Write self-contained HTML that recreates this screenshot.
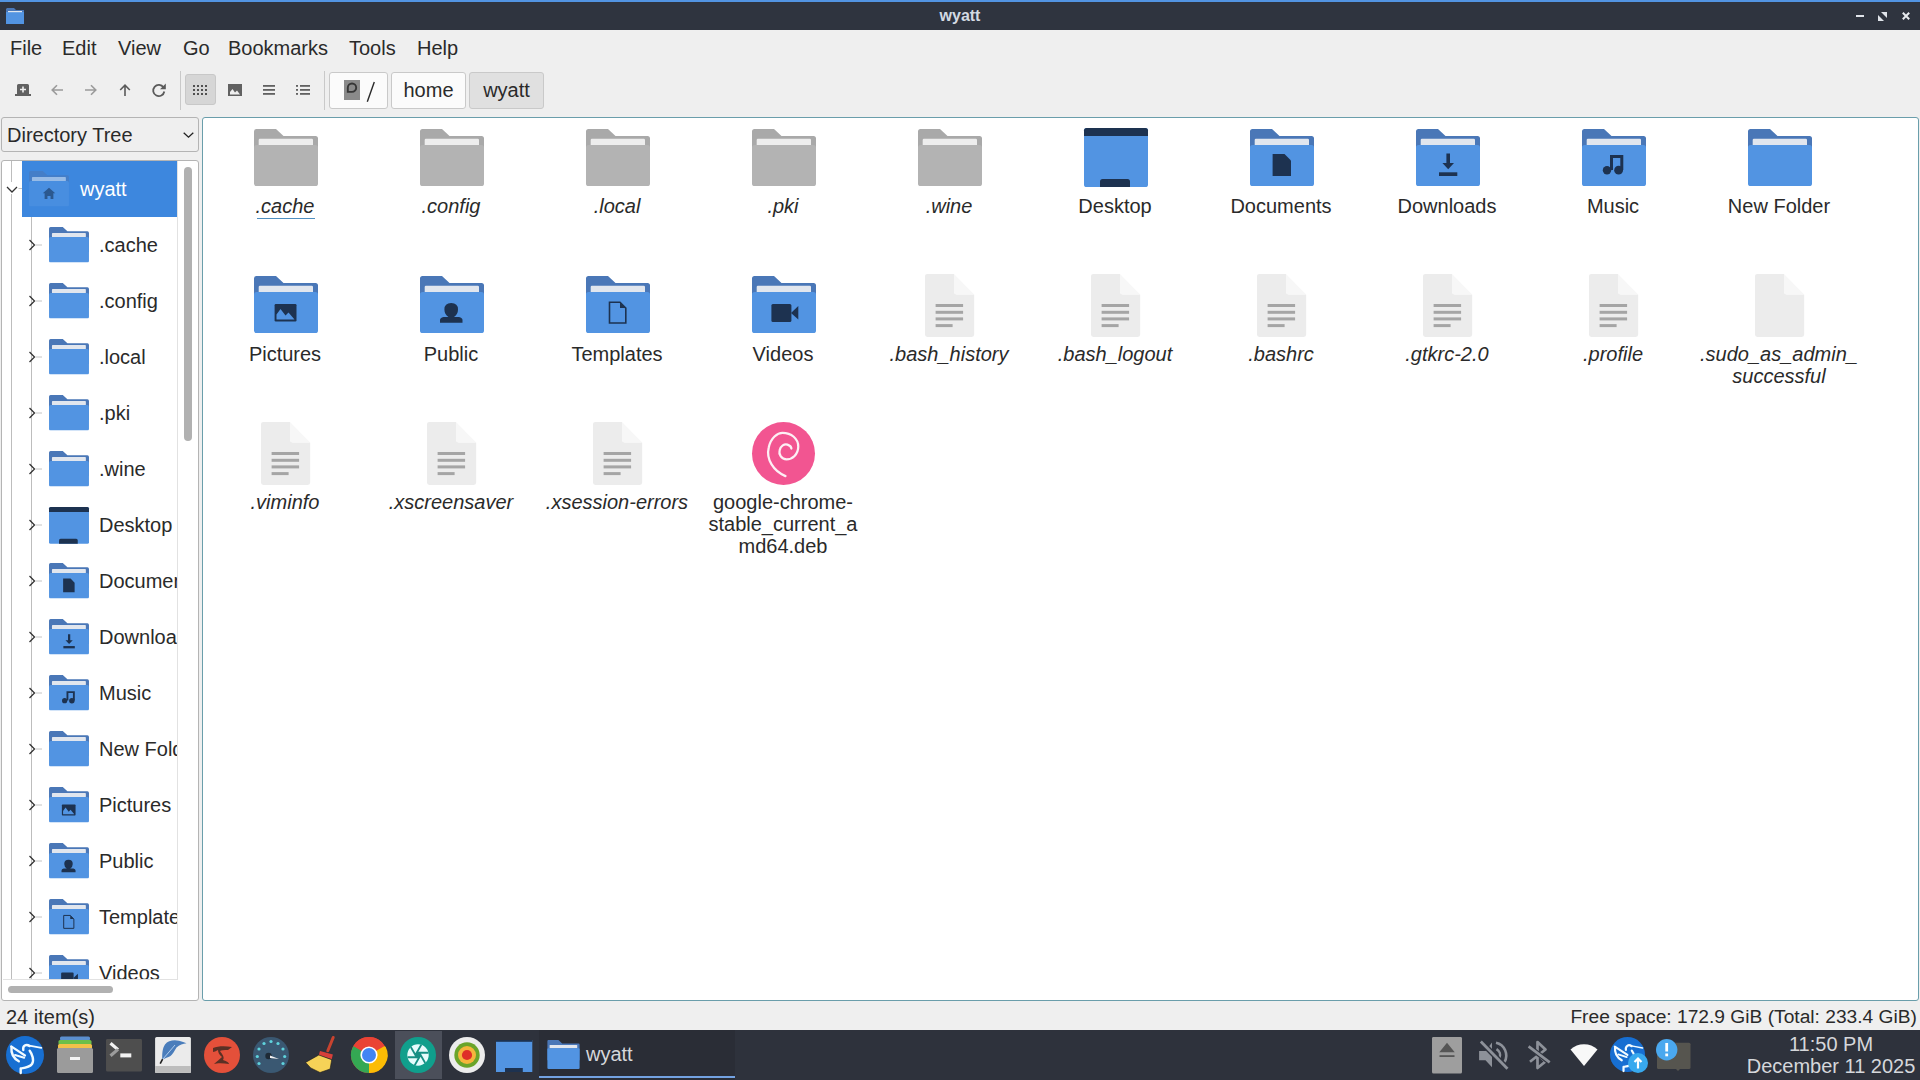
<!DOCTYPE html>
<html><head><meta charset="utf-8">
<style>
*{margin:0;padding:0;box-sizing:border-box}
html,body{width:1920px;height:1080px;overflow:hidden;background:#efefef;font-family:"Liberation Sans",sans-serif;color:#1a1a1a}
.abs{position:absolute}
.ic{position:absolute;overflow:visible}
.lbl{position:absolute;width:180px;text-align:center;font-size:20px;line-height:22px;height:22px;white-space:nowrap;color:#2a2a2a}
.it{font-style:italic}
.tl{position:absolute;font-size:20px;line-height:24px;white-space:nowrap;color:#2a2a2a}
.menu{position:absolute;top:36px;font-size:20px;line-height:24px;color:#2a2a2a}
</style></head><body>
<svg width="0" height="0" style="position:absolute"><defs><symbol id="fgray" viewBox="0 0 64 57"><path d="M2.5 0H22L29.5 7H61.5Q64 7 64 9.5V40H0V2.5Q0 0 2.5 0Z" fill="#a9a9a9"/><rect x="4.7" y="9.8" width="54.3" height="6.6" rx="1.2" fill="#ededed"/><rect x="0" y="16" width="64" height="41" rx="2.6" fill="#b3b3b3"/></symbol>
<symbol id="fblue" viewBox="0 0 64 57"><path d="M2.5 0H22L29.5 7H61.5Q64 7 64 9.5V40H0V2.5Q0 0 2.5 0Z" fill="#4a77b7"/><rect x="4.7" y="9.8" width="54.3" height="6.6" rx="1.2" fill="#e1e6ee"/><rect x="0" y="16" width="64" height="41" rx="2.6" fill="#5294e2"/></symbol></defs></svg>

<!-- title bar -->
<div class="abs" style="left:0;top:0;width:1920px;height:30px;background:#2f343f"></div>
<div class="abs" style="left:0;top:0;width:1920px;height:2px;background:#5294e2"></div>
<svg class="ic" style="left:6px;top:8px;width:18px;height:16px" viewBox="0 0 18 16"><path d="M1 0H8L10 2H18V16H0V1Z" fill="#4a77b7"/><rect x="0" y="4" width="18" height="12" fill="#5294e2"/><rect x="2" y="3" width="14" height="1.2" fill="#dfe6ee"/></svg>
<div class="abs" style="left:0;top:5px;width:1920px;text-align:center;font-size:16px;line-height:22px;font-weight:bold;color:#d3dae3">wyatt</div>
<div class="abs" style="left:1856px;top:15px;width:8px;height:2px;background:#e0e4ea"></div>
<svg class="ic" style="left:1878px;top:12px;width:9px;height:9px" viewBox="0 0 9 9"><path d="M3 0H9V6Z" fill="#e0e4ea"/><path d="M0 3V9H6Z" fill="#e0e4ea"/></svg>
<svg class="ic" style="left:1902px;top:12px;width:8px;height:8px" viewBox="0 0 8 8"><path d="M0.8 0.8L7.2 7.2M7.2 0.8L0.8 7.2" stroke="#e8ebef" stroke-width="2"/></svg>

<!-- menu -->
<div class="menu" style="left:10px">File</div>
<div class="menu" style="left:62px">Edit</div>
<div class="menu" style="left:118px">View</div>
<div class="menu" style="left:183px">Go</div>
<div class="menu" style="left:228px">Bookmarks</div>
<div class="menu" style="left:349px">Tools</div>
<div class="menu" style="left:417px">Help</div>

<!-- toolbar -->
<svg class="ic" style="left:15px;top:84px;width:16px;height:12px" viewBox="0 0 16 12"><path d="M2 10V1.5Q2 0 3.5 0H12.5Q14 0 14 1.5V10H16V12H0V10Z" fill="#616161"/><path d="M7.2 2.5H8.8V4.7H11V6.3H8.8V8.5H7.2V6.3H5V4.7H7.2Z" fill="#efefef"/></svg>
<svg class="ic" style="left:51px;top:84px;width:12px;height:12px" viewBox="0 0 12 12"><path d="M12 6H1.5M6 1.2L1.2 6L6 10.8" fill="none" stroke="#9a9a9a" stroke-width="1.6"/></svg>
<svg class="ic" style="left:85px;top:84px;width:12px;height:12px" viewBox="0 0 12 12"><path d="M0 6H10.5M6 1.2L10.8 6L6 10.8" fill="none" stroke="#9a9a9a" stroke-width="1.6"/></svg>
<svg class="ic" style="left:119px;top:84px;width:12px;height:12px" viewBox="0 0 12 12"><path d="M6 12V1.5M1.2 6L6 1.2L10.8 6" fill="none" stroke="#5a5a5a" stroke-width="1.6"/></svg>
<svg class="ic" style="left:152px;top:83px;width:14px;height:14px" viewBox="0 0 14 14"><path d="M11.5 4.5A5.6 5.6 0 1 0 12.3 8.5" fill="none" stroke="#5a5a5a" stroke-width="1.8"/><path d="M13.8 0.5V6.3H8Z" fill="#5a5a5a"/></svg>
<div class="abs" style="left:180px;top:71px;width:1px;height:39px;background:#c9c9c9"></div>
<div class="abs" style="left:185px;top:74px;width:31px;height:31px;background:#d6d6d6;border:1px solid #c8c8c8;border-radius:3px"></div>
<svg class="ic" style="left:193px;top:85px;width:16px;height:11px" viewBox="0 0 16 11"><g fill="#505050"><rect x="0" y="0" width="2" height="2"/><rect x="4" y="0" width="2" height="2"/><rect x="8" y="0" width="2" height="2"/><rect x="12" y="0" width="2" height="2"/><rect x="0" y="4" width="2" height="2"/><rect x="4" y="4" width="2" height="2"/><rect x="8" y="4" width="2" height="2"/><rect x="12" y="4" width="2" height="2"/><rect x="0" y="8" width="2" height="2"/><rect x="4" y="8" width="2" height="2"/><rect x="8" y="8" width="2" height="2"/><rect x="12" y="8" width="2" height="2"/></g></svg>
<svg class="ic" style="left:228px;top:84px;width:14px;height:12px" viewBox="0 0 14 12"><rect width="14" height="12" fill="#616161"/><path d="M2 10.5V8L4.5 5L7 8.5L9 6.5L12 10.5Z" fill="#efefef"/></svg>
<svg class="ic" style="left:263px;top:85px;width:12px;height:10px" viewBox="0 0 12 10"><g fill="#616161"><rect y="0" width="12" height="1.8"/><rect y="4" width="12" height="1.8"/><rect y="8" width="12" height="1.8"/></g></svg>
<svg class="ic" style="left:296px;top:85px;width:14px;height:10px" viewBox="0 0 14 10"><g fill="#616161"><rect y="0" width="2" height="1.8"/><rect x="4" y="0" width="10" height="1.8"/><rect y="4" width="2" height="1.8"/><rect x="4" y="4" width="10" height="1.8"/><rect y="8" width="2" height="1.8"/><rect x="4" y="8" width="10" height="1.8"/></g></svg>
<div class="abs" style="left:324px;top:71px;width:1px;height:39px;background:#c9c9c9"></div>
<div class="abs" style="left:329px;top:72px;width:59px;height:37px;background:#fbfbfb;border:1px solid #c9c9c9;border-radius:3px"></div>
<svg class="ic" style="left:344px;top:80px;width:16px;height:20px" viewBox="0 0 16 20"><rect width="16" height="20" fill="#8a8a8a"/><path d="M3.8 11.9V7.7A4.2 4.2 0 1 1 8 11.9Z" fill="none" stroke="#363636" stroke-width="1.9"/></svg>
<svg class="ic" style="left:366px;top:81px;width:10px;height:22px" viewBox="0 0 10 22"><path d="M8.3 1L1.3 20.7" stroke="#2a2a2a" stroke-width="1.4"/></svg>
<div class="abs" style="left:391px;top:72px;width:75px;height:37px;background:#fbfbfb;border:1px solid #c9c9c9;border-radius:3px;text-align:center;font-size:20px;line-height:35px;color:#2a2a2a">home</div>
<div class="abs" style="left:469px;top:72px;width:75px;height:37px;background:#e0e0e0;border:1px solid #c9c9c9;border-radius:3px;text-align:center;font-size:20px;line-height:35px;color:#2a2a2a">wyatt</div>

<!-- side combobox -->
<div class="abs" style="left:1px;top:117px;width:198px;height:35px;background:#efefef;border:1px solid #b4b4b4;border-radius:3px"></div>
<div class="abs" style="left:7px;top:123px;font-size:20px;line-height:24px;color:#2a2a2a">Directory Tree</div>
<svg class="ic" style="left:182.5px;top:131.5px;width:11px;height:6px" viewBox="0 0 11 6"><path d="M0.7 0.7L5.5 5.2L10.3 0.7" fill="none" stroke="#222" stroke-width="1.3"/></svg>

<!-- tree box -->
<div class="abs" style="left:1px;top:160px;width:198px;height:841px;background:#fff;border:1px solid #b4b4b4;border-radius:3px"></div>
<div class="abs" style="left:2px;top:161px;width:176px;height:818px;overflow:hidden">
<div class="abs" style="left:-2px;top:-161px;width:1920px;height:1080px">
<div style="position:absolute;left:11px;top:161px;width:1px;height:818px;background:#bdbdbd"></div>
<div style="position:absolute;left:31px;top:217px;width:1px;height:762px;background:#bdbdbd"></div>
<div style="position:absolute;left:22px;top:161px;width:155px;height:56px;background:#3d87de"></div>
<svg class="ic" style="left:29px;top:171px;width:40px;height:35.6px;opacity:.55" viewBox="0 0 64 57"><use href="#fblue"/><path d="M32 27L42 35.5H39V45H34.5V40H29.5V45H25V35.5H22Z" fill="#1d3250"/></svg>
<div class="tl" style="left:80px;top:177px;color:#fff">wyatt</div>
<div class="abs" style="left:5px;top:182px;width:13px;height:12px;background:#fff"></div><svg class="ic" style="left:6px;top:186px;width:16px;height:8px" viewBox="0 0 16 8"><path d="M1 1L6 6L11 1" fill="none" stroke="#333" stroke-width="1.3"/><path d="M12.5 2.5H16" stroke="#c4c4c4" stroke-width="1"/></svg>
<svg class="ic" style="left:49px;top:227px;width:40px;height:35.6px" viewBox="0 0 64 57"><use href="#fblue"/></svg>
<div class="tl" style="left:99px;top:233px">.cache</div>
<svg class="ic" style="left:28px;top:239px;width:14px;height:12px" viewBox="0 0 14 12"><path d="M1.5 1L6.5 6L1.5 11" fill="none" stroke="#333" stroke-width="1.3"/><path d="M7.5 6H14" stroke="#c4c4c4" stroke-width="1"/></svg>
<svg class="ic" style="left:49px;top:283px;width:40px;height:35.6px" viewBox="0 0 64 57"><use href="#fblue"/></svg>
<div class="tl" style="left:99px;top:289px">.config</div>
<svg class="ic" style="left:28px;top:295px;width:14px;height:12px" viewBox="0 0 14 12"><path d="M1.5 1L6.5 6L1.5 11" fill="none" stroke="#333" stroke-width="1.3"/><path d="M7.5 6H14" stroke="#c4c4c4" stroke-width="1"/></svg>
<svg class="ic" style="left:49px;top:339px;width:40px;height:35.6px" viewBox="0 0 64 57"><use href="#fblue"/></svg>
<div class="tl" style="left:99px;top:345px">.local</div>
<svg class="ic" style="left:28px;top:351px;width:14px;height:12px" viewBox="0 0 14 12"><path d="M1.5 1L6.5 6L1.5 11" fill="none" stroke="#333" stroke-width="1.3"/><path d="M7.5 6H14" stroke="#c4c4c4" stroke-width="1"/></svg>
<svg class="ic" style="left:49px;top:395px;width:40px;height:35.6px" viewBox="0 0 64 57"><use href="#fblue"/></svg>
<div class="tl" style="left:99px;top:401px">.pki</div>
<svg class="ic" style="left:28px;top:407px;width:14px;height:12px" viewBox="0 0 14 12"><path d="M1.5 1L6.5 6L1.5 11" fill="none" stroke="#333" stroke-width="1.3"/><path d="M7.5 6H14" stroke="#c4c4c4" stroke-width="1"/></svg>
<svg class="ic" style="left:49px;top:451px;width:40px;height:35.6px" viewBox="0 0 64 57"><use href="#fblue"/></svg>
<div class="tl" style="left:99px;top:457px">.wine</div>
<svg class="ic" style="left:28px;top:463px;width:14px;height:12px" viewBox="0 0 14 12"><path d="M1.5 1L6.5 6L1.5 11" fill="none" stroke="#333" stroke-width="1.3"/><path d="M7.5 6H14" stroke="#c4c4c4" stroke-width="1"/></svg>
<svg class="ic" style="left:49px;top:507px;width:40px;height:36.849122807017544px" viewBox="0 0 64 59"><rect x="0" y="0" width="64" height="59" rx="2.6" fill="#5294e2"/><path d="M2.6 0H61.4Q64 0 64 2.6V8H0V2.6Q0 0 2.6 0Z" fill="#1d3250"/><path d="M16 59V53.5Q16 51 18.5 51H43.5Q46 51 46 53.5V59Z" fill="#1d3250"/></svg>
<div class="tl" style="left:99px;top:513px">Desktop</div>
<svg class="ic" style="left:28px;top:519px;width:14px;height:12px" viewBox="0 0 14 12"><path d="M1.5 1L6.5 6L1.5 11" fill="none" stroke="#333" stroke-width="1.3"/><path d="M7.5 6H14" stroke="#c4c4c4" stroke-width="1"/></svg>
<svg class="ic" style="left:49px;top:563px;width:40px;height:35.6px" viewBox="0 0 64 57"><use href="#fblue"/><path d="M22.6 25H34.5L41 31.5V47H22.6Z" fill="#1d3250"/></svg>
<div class="tl" style="left:99px;top:569px">Documents</div>
<svg class="ic" style="left:28px;top:575px;width:14px;height:12px" viewBox="0 0 14 12"><path d="M1.5 1L6.5 6L1.5 11" fill="none" stroke="#333" stroke-width="1.3"/><path d="M7.5 6H14" stroke="#c4c4c4" stroke-width="1"/></svg>
<svg class="ic" style="left:49px;top:619px;width:40px;height:35.6px" viewBox="0 0 64 57"><use href="#fblue"/><path d="M30.4 24.4H34V34H38L32.2 40.2L26.4 34H30.4Z" fill="#1d3250"/><rect x="23" y="43.3" width="18.3" height="3.7" fill="#1d3250"/></svg>
<div class="tl" style="left:99px;top:625px">Downloads</div>
<svg class="ic" style="left:28px;top:631px;width:14px;height:12px" viewBox="0 0 14 12"><path d="M1.5 1L6.5 6L1.5 11" fill="none" stroke="#333" stroke-width="1.3"/><path d="M7.5 6H14" stroke="#c4c4c4" stroke-width="1"/></svg>
<svg class="ic" style="left:49px;top:675px;width:40px;height:35.6px" viewBox="0 0 64 57"><use href="#fblue"/><path d="M28 26H41.3V41H38.3V29H31V41H28Z" fill="#1d3250"/><circle cx="25" cy="41.2" r="4.2" fill="#1d3250"/><circle cx="36.6" cy="41.2" r="4.4" fill="#1d3250"/></svg>
<div class="tl" style="left:99px;top:681px">Music</div>
<svg class="ic" style="left:28px;top:687px;width:14px;height:12px" viewBox="0 0 14 12"><path d="M1.5 1L6.5 6L1.5 11" fill="none" stroke="#333" stroke-width="1.3"/><path d="M7.5 6H14" stroke="#c4c4c4" stroke-width="1"/></svg>
<svg class="ic" style="left:49px;top:731px;width:40px;height:35.6px" viewBox="0 0 64 57"><use href="#fblue"/></svg>
<div class="tl" style="left:99px;top:737px">New Folder</div>
<svg class="ic" style="left:28px;top:743px;width:14px;height:12px" viewBox="0 0 14 12"><path d="M1.5 1L6.5 6L1.5 11" fill="none" stroke="#333" stroke-width="1.3"/><path d="M7.5 6H14" stroke="#c4c4c4" stroke-width="1"/></svg>
<svg class="ic" style="left:49px;top:787px;width:40px;height:35.6px" viewBox="0 0 64 57"><use href="#fblue"/><rect x="20.6" y="28" width="21.9" height="17.5" rx="1.2" fill="#1d3250"/><path d="M22.5 43.5V38.5L26.5 33L31.5 39.5L34.5 36.5L40.5 43.5Z" fill="#5294e2"/></svg>
<div class="tl" style="left:99px;top:793px">Pictures</div>
<svg class="ic" style="left:28px;top:799px;width:14px;height:12px" viewBox="0 0 14 12"><path d="M1.5 1L6.5 6L1.5 11" fill="none" stroke="#333" stroke-width="1.3"/><path d="M7.5 6H14" stroke="#c4c4c4" stroke-width="1"/></svg>
<svg class="ic" style="left:49px;top:843px;width:40px;height:35.6px" viewBox="0 0 64 57"><use href="#fblue"/><path d="M31.2 27Q38 27 38 33.5Q38 38 34 41H39Q42.5 41.8 42.5 44V46.8H20V44Q20 41.8 23.5 41H28.4Q24.4 38 24.4 33.5Q24.4 27 31.2 27Z" fill="#1d3250"/></svg>
<div class="tl" style="left:99px;top:849px">Public</div>
<svg class="ic" style="left:28px;top:855px;width:14px;height:12px" viewBox="0 0 14 12"><path d="M1.5 1L6.5 6L1.5 11" fill="none" stroke="#333" stroke-width="1.3"/><path d="M7.5 6H14" stroke="#c4c4c4" stroke-width="1"/></svg>
<svg class="ic" style="left:49px;top:899px;width:40px;height:35.6px" viewBox="0 0 64 57"><use href="#fblue"/><path d="M23.5 26.3H34L39.8 32.1V47H23.5Z" fill="none" stroke="#1d3250" stroke-width="1.6"/><path d="M34 26.3V32.1H39.8Z" fill="#1d3250"/></svg>
<div class="tl" style="left:99px;top:905px">Templates</div>
<svg class="ic" style="left:28px;top:911px;width:14px;height:12px" viewBox="0 0 14 12"><path d="M1.5 1L6.5 6L1.5 11" fill="none" stroke="#333" stroke-width="1.3"/><path d="M7.5 6H14" stroke="#c4c4c4" stroke-width="1"/></svg>
<svg class="ic" style="left:49px;top:955px;width:40px;height:35.6px" viewBox="0 0 64 57"><use href="#fblue"/><rect x="19.4" y="28" width="20" height="18" rx="1.5" fill="#1d3250"/><path d="M39 37L46.3 30V43.5Z" fill="#1d3250"/></svg>
<div class="tl" style="left:99px;top:961px">Videos</div>
<svg class="ic" style="left:28px;top:967px;width:14px;height:12px" viewBox="0 0 14 12"><path d="M1.5 1L6.5 6L1.5 11" fill="none" stroke="#333" stroke-width="1.3"/><path d="M7.5 6H14" stroke="#c4c4c4" stroke-width="1"/></svg>
</div></div>
<div class="abs" style="left:177px;top:161px;width:1px;height:819px;background:#e2e2e2"></div><div class="abs" style="left:3px;top:979px;width:175px;height:1px;background:#e2e2e2"></div>
<div class="abs" style="left:184px;top:167px;width:8px;height:274px;background:#b1b1b1;border-radius:4px"></div>
<div class="abs" style="left:8px;top:986px;width:105px;height:7px;background:#b1b1b1;border-radius:4px"></div>

<!-- main view -->
<div class="abs" style="left:202px;top:117px;width:1717px;height:884px;background:#fff;border:1px solid #6a9eab;border-radius:3px"></div>
<svg class="ic" style="left:254px;top:128.7px;width:64px;height:57px" viewBox="0 0 64 57"><use href="#fgray"/></svg>
<div class="lbl it" style="left:195px;top:195px">.cache</div>
<svg class="ic" style="left:420px;top:128.7px;width:64px;height:57px" viewBox="0 0 64 57"><use href="#fgray"/></svg>
<div class="lbl it" style="left:361px;top:195px">.config</div>
<svg class="ic" style="left:586px;top:128.7px;width:64px;height:57px" viewBox="0 0 64 57"><use href="#fgray"/></svg>
<div class="lbl it" style="left:527px;top:195px">.local</div>
<svg class="ic" style="left:752px;top:128.7px;width:64px;height:57px" viewBox="0 0 64 57"><use href="#fgray"/></svg>
<div class="lbl it" style="left:693px;top:195px">.pki</div>
<svg class="ic" style="left:918px;top:128.7px;width:64px;height:57px" viewBox="0 0 64 57"><use href="#fgray"/></svg>
<div class="lbl it" style="left:859px;top:195px">.wine</div>
<svg class="ic" style="left:1084px;top:127.49999999999999px;width:64px;height:59.0px" viewBox="0 0 64 59"><rect x="0" y="0" width="64" height="59" rx="2.6" fill="#5294e2"/><path d="M2.6 0H61.4Q64 0 64 2.6V8H0V2.6Q0 0 2.6 0Z" fill="#1d3250"/><path d="M16 59V53.5Q16 51 18.5 51H43.5Q46 51 46 53.5V59Z" fill="#1d3250"/></svg>
<div class="lbl" style="left:1025px;top:195px">Desktop</div>
<svg class="ic" style="left:1250px;top:128.7px;width:64px;height:57px" viewBox="0 0 64 57"><use href="#fblue"/><path d="M22.6 25H34.5L41 31.5V47H22.6Z" fill="#1d3250"/></svg>
<div class="lbl" style="left:1191px;top:195px">Documents</div>
<svg class="ic" style="left:1416px;top:128.7px;width:64px;height:57px" viewBox="0 0 64 57"><use href="#fblue"/><path d="M30.4 24.4H34V34H38L32.2 40.2L26.4 34H30.4Z" fill="#1d3250"/><rect x="23" y="43.3" width="18.3" height="3.7" fill="#1d3250"/></svg>
<div class="lbl" style="left:1357px;top:195px">Downloads</div>
<svg class="ic" style="left:1582px;top:128.7px;width:64px;height:57px" viewBox="0 0 64 57"><use href="#fblue"/><path d="M28 26H41.3V41H38.3V29H31V41H28Z" fill="#1d3250"/><circle cx="25" cy="41.2" r="4.2" fill="#1d3250"/><circle cx="36.6" cy="41.2" r="4.4" fill="#1d3250"/></svg>
<div class="lbl" style="left:1523px;top:195px">Music</div>
<svg class="ic" style="left:1748px;top:128.7px;width:64px;height:57px" viewBox="0 0 64 57"><use href="#fblue"/></svg>
<div class="lbl" style="left:1689px;top:195px">New Folder</div>
<svg class="ic" style="left:254px;top:276.2px;width:64px;height:57px" viewBox="0 0 64 57"><use href="#fblue"/><rect x="20.6" y="28" width="21.9" height="17.5" rx="1.2" fill="#1d3250"/><path d="M22.5 43.5V38.5L26.5 33L31.5 39.5L34.5 36.5L40.5 43.5Z" fill="#5294e2"/></svg>
<div class="lbl" style="left:195px;top:343px">Pictures</div>
<svg class="ic" style="left:420px;top:276.2px;width:64px;height:57px" viewBox="0 0 64 57"><use href="#fblue"/><path d="M31.2 27Q38 27 38 33.5Q38 38 34 41H39Q42.5 41.8 42.5 44V46.8H20V44Q20 41.8 23.5 41H28.4Q24.4 38 24.4 33.5Q24.4 27 31.2 27Z" fill="#1d3250"/></svg>
<div class="lbl" style="left:361px;top:343px">Public</div>
<svg class="ic" style="left:586px;top:276.2px;width:64px;height:57px" viewBox="0 0 64 57"><use href="#fblue"/><path d="M23.5 26.3H34L39.8 32.1V47H23.5Z" fill="none" stroke="#1d3250" stroke-width="1.6"/><path d="M34 26.3V32.1H39.8Z" fill="#1d3250"/></svg>
<div class="lbl" style="left:527px;top:343px">Templates</div>
<svg class="ic" style="left:752px;top:276.2px;width:64px;height:57px" viewBox="0 0 64 57"><use href="#fblue"/><rect x="19.4" y="28" width="20" height="18" rx="1.5" fill="#1d3250"/><path d="M39 37L46.3 30V43.5Z" fill="#1d3250"/></svg>
<div class="lbl" style="left:693px;top:343px">Videos</div>
<svg class="ic" style="left:924.6px;top:274px;width:49.2px;height:63px" viewBox="0 0 49.2 63"><path d="M2.5 0H29V17.4Q29 20.4 32 20.4H49.2V60.5Q49.2 63 46.7 63H2.5Q0 63 0 60.5V2.5Q0 0 2.5 0Z" fill="#ececec"/><path d="M29 0L49.2 20.4H32Q29 20.4 29 17.4Z" fill="#f7f7f7"/><g fill="#a5a5a5"><rect x="10.6" y="30" width="27.5" height="3"/><rect x="10.6" y="36.8" width="27.5" height="3"/><rect x="10.6" y="43.4" width="27.5" height="3"/><rect x="10.6" y="50.1" width="17" height="3"/></g></svg>
<div class="lbl it" style="left:859px;top:343px">.bash_history</div>
<svg class="ic" style="left:1090.6px;top:274px;width:49.2px;height:63px" viewBox="0 0 49.2 63"><path d="M2.5 0H29V17.4Q29 20.4 32 20.4H49.2V60.5Q49.2 63 46.7 63H2.5Q0 63 0 60.5V2.5Q0 0 2.5 0Z" fill="#ececec"/><path d="M29 0L49.2 20.4H32Q29 20.4 29 17.4Z" fill="#f7f7f7"/><g fill="#a5a5a5"><rect x="10.6" y="30" width="27.5" height="3"/><rect x="10.6" y="36.8" width="27.5" height="3"/><rect x="10.6" y="43.4" width="27.5" height="3"/><rect x="10.6" y="50.1" width="17" height="3"/></g></svg>
<div class="lbl it" style="left:1025px;top:343px">.bash_logout</div>
<svg class="ic" style="left:1256.6px;top:274px;width:49.2px;height:63px" viewBox="0 0 49.2 63"><path d="M2.5 0H29V17.4Q29 20.4 32 20.4H49.2V60.5Q49.2 63 46.7 63H2.5Q0 63 0 60.5V2.5Q0 0 2.5 0Z" fill="#ececec"/><path d="M29 0L49.2 20.4H32Q29 20.4 29 17.4Z" fill="#f7f7f7"/><g fill="#a5a5a5"><rect x="10.6" y="30" width="27.5" height="3"/><rect x="10.6" y="36.8" width="27.5" height="3"/><rect x="10.6" y="43.4" width="27.5" height="3"/><rect x="10.6" y="50.1" width="17" height="3"/></g></svg>
<div class="lbl it" style="left:1191px;top:343px">.bashrc</div>
<svg class="ic" style="left:1422.6px;top:274px;width:49.2px;height:63px" viewBox="0 0 49.2 63"><path d="M2.5 0H29V17.4Q29 20.4 32 20.4H49.2V60.5Q49.2 63 46.7 63H2.5Q0 63 0 60.5V2.5Q0 0 2.5 0Z" fill="#ececec"/><path d="M29 0L49.2 20.4H32Q29 20.4 29 17.4Z" fill="#f7f7f7"/><g fill="#a5a5a5"><rect x="10.6" y="30" width="27.5" height="3"/><rect x="10.6" y="36.8" width="27.5" height="3"/><rect x="10.6" y="43.4" width="27.5" height="3"/><rect x="10.6" y="50.1" width="17" height="3"/></g></svg>
<div class="lbl it" style="left:1357px;top:343px">.gtkrc-2.0</div>
<svg class="ic" style="left:1588.6px;top:274px;width:49.2px;height:63px" viewBox="0 0 49.2 63"><path d="M2.5 0H29V17.4Q29 20.4 32 20.4H49.2V60.5Q49.2 63 46.7 63H2.5Q0 63 0 60.5V2.5Q0 0 2.5 0Z" fill="#ececec"/><path d="M29 0L49.2 20.4H32Q29 20.4 29 17.4Z" fill="#f7f7f7"/><g fill="#a5a5a5"><rect x="10.6" y="30" width="27.5" height="3"/><rect x="10.6" y="36.8" width="27.5" height="3"/><rect x="10.6" y="43.4" width="27.5" height="3"/><rect x="10.6" y="50.1" width="17" height="3"/></g></svg>
<div class="lbl it" style="left:1523px;top:343px">.profile</div>
<svg class="ic" style="left:1754.6px;top:274px;width:49.2px;height:63px" viewBox="0 0 49.2 63"><path d="M2.5 0H29V17.4Q29 20.4 32 20.4H49.2V60.5Q49.2 63 46.7 63H2.5Q0 63 0 60.5V2.5Q0 0 2.5 0Z" fill="#ececec"/><path d="M29 0L49.2 20.4H32Q29 20.4 29 17.4Z" fill="#f7f7f7"/></svg>
<div class="lbl it" style="left:1689px;top:343px">.sudo_as_admin_</div>
<div class="lbl it" style="left:1689px;top:365px">successful</div>
<svg class="ic" style="left:260.6px;top:422px;width:49.2px;height:63px" viewBox="0 0 49.2 63"><path d="M2.5 0H29V17.4Q29 20.4 32 20.4H49.2V60.5Q49.2 63 46.7 63H2.5Q0 63 0 60.5V2.5Q0 0 2.5 0Z" fill="#ececec"/><path d="M29 0L49.2 20.4H32Q29 20.4 29 17.4Z" fill="#f7f7f7"/><g fill="#a5a5a5"><rect x="10.6" y="30" width="27.5" height="3"/><rect x="10.6" y="36.8" width="27.5" height="3"/><rect x="10.6" y="43.4" width="27.5" height="3"/><rect x="10.6" y="50.1" width="17" height="3"/></g></svg>
<div class="lbl it" style="left:195px;top:491px">.viminfo</div>
<svg class="ic" style="left:426.6px;top:422px;width:49.2px;height:63px" viewBox="0 0 49.2 63"><path d="M2.5 0H29V17.4Q29 20.4 32 20.4H49.2V60.5Q49.2 63 46.7 63H2.5Q0 63 0 60.5V2.5Q0 0 2.5 0Z" fill="#ececec"/><path d="M29 0L49.2 20.4H32Q29 20.4 29 17.4Z" fill="#f7f7f7"/><g fill="#a5a5a5"><rect x="10.6" y="30" width="27.5" height="3"/><rect x="10.6" y="36.8" width="27.5" height="3"/><rect x="10.6" y="43.4" width="27.5" height="3"/><rect x="10.6" y="50.1" width="17" height="3"/></g></svg>
<div class="lbl it" style="left:361px;top:491px">.xscreensaver</div>
<svg class="ic" style="left:592.6px;top:422px;width:49.2px;height:63px" viewBox="0 0 49.2 63"><path d="M2.5 0H29V17.4Q29 20.4 32 20.4H49.2V60.5Q49.2 63 46.7 63H2.5Q0 63 0 60.5V2.5Q0 0 2.5 0Z" fill="#ececec"/><path d="M29 0L49.2 20.4H32Q29 20.4 29 17.4Z" fill="#f7f7f7"/><g fill="#a5a5a5"><rect x="10.6" y="30" width="27.5" height="3"/><rect x="10.6" y="36.8" width="27.5" height="3"/><rect x="10.6" y="43.4" width="27.5" height="3"/><rect x="10.6" y="50.1" width="17" height="3"/></g></svg>
<div class="lbl it" style="left:527px;top:491px">.xsession-errors</div>
<svg class="ic" style="left:752.4px;top:421.7px;width:63px;height:63px" viewBox="0 0 64 64"><circle cx="32" cy="32" r="32" fill="#f25591"/><path d="M34 55C22 50 14 38 17 26C19 16 26 11 31 11C40 11 47 17 47 25C47 33 41 38 35 38C30 38 27 33 28 29C29 24 33 22 36 23C39 24 40 26 40 27" fill="none" stroke="#fdf0f5" stroke-width="2.3" stroke-linecap="round"/></svg>
<div class="lbl" style="left:693px;top:491px">google-chrome-</div>
<div class="lbl" style="left:693px;top:513px">stable_current_a</div>
<div class="lbl" style="left:693px;top:535px">md64.deb</div>
<div style="position:absolute;left:257px;top:218px;width:58px;height:1px;background:#4f8fc0"></div>

<!-- status -->
<div class="abs" style="left:6px;top:1005px;font-size:20px;line-height:24px;color:#2a2a2a">24 item(s)</div>
<div class="abs" style="right:3px;top:1005px;font-size:19.2px;line-height:24px;color:#2a2a2a">Free space: 172.9 GiB (Total: 233.4 GiB)</div>

<!-- taskbar -->
<div class="abs" style="left:0;top:1030px;width:1920px;height:50px;background:#2e323c"></div>

<div class="abs" style="left:395px;top:1031px;width:47px;height:48px;background:#4b4f5a"></div>
<div class="abs" style="left:539px;top:1030px;width:196px;height:50px;background:#2a2d36"></div>
<div class="abs" style="left:539px;top:1076px;width:196px;height:2px;background:#73a2e2"></div>
<!-- bird -->
<svg class="ic" style="left:6px;top:1035.5px;width:38px;height:38px" viewBox="0 0 38 38"><circle cx="19" cy="19" r="19" fill="#176fd2"/><g fill="none" stroke="#f2fbff" stroke-linecap="round" stroke-linejoin="round"><path d="M22 9.4L35.4 11.9" stroke-width="1.6"/><path d="M23.5 10C20 7.5 16.5 10 17.3 14" stroke-width="2.4"/><path d="M23.7 14.8C26 18 28.5 24 26 28C23.5 31.5 18 32 14.7 32.5L14.7 37" stroke-width="2.4"/><path d="M5.2 10.4L19 19.5" stroke-width="2.2"/><path d="M5.5 11C5 16 7 22 12.8 25.3" stroke-width="2.4"/><path d="M9 19L18.2 21.8" stroke-width="2"/></g></svg>
<!-- file cabinet -->
<svg class="ic" style="left:57px;top:1036px;width:36px;height:37px" viewBox="0 0 36 37"><rect x="3" y="0.6" width="30" height="4" rx="1.5" fill="#5b8fd0"/><rect x="1.5" y="4" width="33" height="5" rx="1.5" fill="#6cbf4a"/><rect x="1" y="8" width="34" height="5" rx="1.5" fill="#f2c14a"/><rect x="0" y="12" width="36" height="25" rx="1.5" fill="#9b9b9b"/><rect x="13" y="21" width="10" height="3" fill="#f5f5f5"/></svg>
<!-- terminal -->
<svg class="ic" style="left:106px;top:1038.6px;width:36px;height:32.4px" viewBox="0 0 36 32.4"><rect width="36" height="32.4" rx="1.5" fill="#4e4e4e"/><path d="M4.5 4.2L12 10.6" stroke="#f2f2f2" stroke-width="3.2"/><path d="M12 10.4L4.5 16.8" stroke="#9c9c9c" stroke-width="3.2"/><rect x="14.3" y="14.4" width="11" height="4" fill="#f2f2f2"/></svg>
<!-- feather -->
<svg class="ic" style="left:152px;top:1034px;width:42px;height:42px" viewBox="0 0 42 42"><rect x="3.1" y="3.1" width="35.8" height="35.8" rx="1.5" fill="#ebebeb"/><rect x="3.1" y="32" width="35.8" height="6.9" fill="#bdbdbd"/><path d="M10.3 25.5C10 20 10.5 14 13 10.5C16 6.5 22 5.5 27 6.8C30 7.6 32.5 8.5 34.5 9.3C31 9.6 27.5 11 24.5 13.5C22.5 17 20.5 20.5 18.5 22C16 23.5 13 24.3 10.3 25.5Z" fill="#4a7dbb"/><path d="M11 25L23 11" stroke="#bcd6f2" stroke-width="0.9"/><path d="M10.6 25.2L8.2 29.6" stroke="#1e1e1e" stroke-width="1.6"/></svg>
<!-- red circle -->
<svg class="ic" style="left:204px;top:1036.6px;width:36px;height:36px" viewBox="0 0 36 36"><circle cx="18" cy="18" r="18" fill="#e4503a"/><path d="M9 11C14 9 21 9 28 10L24 13C20 13 17 13 16 14C18 17 21 20 19 23C23 24 25 26 25 27C19 26 13 26 10 27C13 24 16 22 18 20C15 18 14 15 14 13C12 14 10 15 9 15Z" fill="#5a3025"/></svg>
<!-- speedometer -->
<svg class="ic" style="left:253px;top:1036.6px;width:36px;height:36px" viewBox="0 0 36 36"><circle cx="18" cy="18" r="18" fill="#3a5872"/><g fill="#5fd3dc"><circle cx="18" cy="4.5" r="1.6"/><circle cx="25" cy="6.5" r="1.6"/><circle cx="11" cy="6.5" r="1.6"/><circle cx="6" cy="12" r="1.6"/><circle cx="30" cy="12" r="1.6"/><circle cx="4.3" cy="19.5" r="1.6"/><circle cx="31.7" cy="19.5" r="1.6"/><circle cx="6" cy="26.5" r="1.6"/><circle cx="30" cy="26.5" r="1.6"/></g><circle cx="15.5" cy="19" r="3.2" fill="#1e2a36"/><path d="M17 18.5L26 22L17 21Z" fill="#f2f2f2"/></svg>
<!-- broom -->
<svg class="ic" style="left:299px;top:1034px;width:42px;height:42px" viewBox="0 0 42 42"><path d="M34.2 3.5L28.8 16.8" stroke="#c8432f" stroke-width="3" stroke-linecap="round"/><path d="M21 17.1L33.9 20.6L32.7 25.3L19.8 21Z" fill="#d8403a"/><path d="M19.8 21L32.7 25.7L31.1 35L21 38.5L11.7 33.9L6.6 28.4Z" fill="#f6d257" stroke="#1a1a1a" stroke-width="0.6"/></svg>
<!-- chrome -->
<svg class="ic" style="left:351px;top:1036.6px;width:36px;height:36px" viewBox="0 0 36 36"><circle cx="18" cy="18" r="18" fill="#e94235"/><path d="M18 18L2.4 9A18 18 0 0 0 18 36L27 20.5Z" fill="#34a853"/><path d="M18 18H34.8A18 18 0 0 0 33.6 9H18ZM18 18L18 36A18 18 0 0 0 34.5 9.5L18 18Z" fill="#fbbc05"/><path d="M18 18L2.4 9A18 18 0 0 1 33.6 9Z" fill="#ea4335"/><circle cx="18" cy="18" r="8.6" fill="#fff"/><circle cx="18" cy="18" r="7" fill="#4285f4"/></svg>
<!-- aperture -->
<svg class="ic" style="left:400px;top:1037px;width:36px;height:36px" viewBox="0 0 36 36"><circle cx="18" cy="18" r="18" fill="#109f8c"/><circle cx="18" cy="18" r="10.7" fill="#e6fbfb"/><circle cx="18" cy="18" r="2.4" fill="#168f84"/><path transform="translate(36 0) scale(-1 1)" d="M25.18 10.07L18.91 20.93M28.46 20.25L15.92 20.25M21.28 28.18L15.01 17.32M10.82 25.93L17.09 15.07M7.54 15.75L20.08 15.75M14.72 7.82L20.99 18.68" stroke="#168f84" stroke-width="1.8" fill="none"/></svg>
<!-- target -->
<svg class="ic" style="left:449px;top:1036.6px;width:36px;height:36px" viewBox="0 0 36 36"><circle cx="18" cy="18" r="18" fill="#ececec"/><circle cx="18" cy="18" r="12.7" fill="#6aa42a"/><circle cx="18" cy="18" r="9" fill="#f5b53c"/><circle cx="18" cy="18" r="5.1" fill="#df2f28"/></svg>
<!-- desktop -->
<svg class="ic" style="left:496px;top:1040px;width:36.3px;height:32px" viewBox="0 0 36.3 32"><rect width="36.3" height="32" fill="#5294e2"/><rect width="36.3" height="1.8" fill="#1d3250"/><rect x="9" y="28" width="17.8" height="4" fill="#1d3250"/></svg>
<!-- task folder -->
<svg class="ic" style="left:547px;top:1040px;width:33px;height:29px" viewBox="0 0 64 57"><use href="#fblue"/></svg>
<div class="abs" style="left:586px;top:1042px;font-size:20px;line-height:24px;color:#d5d7db">wyatt</div>
<!-- tray -->
<svg class="ic" style="left:1432px;top:1036.6px;width:30px;height:36.4px" viewBox="0 0 30 36.4"><rect width="30" height="36.4" rx="1.5" fill="#9e9e9e"/><path d="M15 5.8L22.7 15.3H7.3Z" fill="#555"/><rect x="7.5" y="18.2" width="15" height="1.8" fill="#555"/></svg>
<svg class="ic" style="left:1470px;top:1034px;width:42px;height:42px" viewBox="0 0 42 42"><path d="M9.1 16.9H15.5L22 8.5V33.3L15.5 26.3H9.1Z" fill="#8d9199"/><path d="M26 8.8A13 13 0 0 1 34.5 28M26.5 15.2A7 7 0 0 1 29.5 24" fill="none" stroke="#8d9199" stroke-width="2.6"/><path d="M10.8 7.5L37.5 34.7" stroke="#2e323c" stroke-width="5.5"/><path d="M10.8 7.5L37.5 34.7" stroke="#8d9199" stroke-width="2.8"/></svg>
<svg class="ic" style="left:1470px;top:1034px;width:90px;height:42px" viewBox="0 0 90 42"><path d="M60 14L75.5 27.5L67.5 34V8L75.5 15.5L60 27.7" fill="none" stroke="#8d9199" stroke-width="2.7" stroke-linejoin="round"/><path d="M58.6 12.4L79.7 28.4" stroke="#2e323c" stroke-width="5"/><path d="M58.6 12.4L79.7 28.4" stroke="#8d9199" stroke-width="2.7"/></svg>
<svg class="ic" style="left:1570px;top:1043px;width:28px;height:23px" viewBox="0 0 28 23"><path d="M14 23L0.5 6.5A20 20 0 0 1 27.5 6.5Z" fill="#f8f8f8"/></svg>
<svg class="ic" style="left:1609.6px;top:1037.3px;width:38px;height:36px" viewBox="0 0 38 36"><circle cx="17.5" cy="17.5" r="17.5" fill="#176fd2"/><g transform="scale(0.92)"><g fill="none" stroke="#f2fbff" stroke-linecap="round" stroke-linejoin="round"><path d="M22 9.4L35.4 11.9" stroke-width="1.6"/><path d="M23.5 10C20 7.5 16.5 10 17.3 14" stroke-width="2.4"/><path d="M23.7 14.8C26 18 28.5 24 26 28C23.5 31.5 18 32 14.7 32.5L14.7 37" stroke-width="2.4"/><path d="M5.2 10.4L19 19.5" stroke-width="2.2"/><path d="M5.5 11C5 16 7 22 12.8 25.3" stroke-width="2.4"/><path d="M9 19L18.2 21.8" stroke-width="2"/></g></g><circle cx="28" cy="26" r="10" fill="#38a9ee"/><path d="M28 31.5V21.5M24.5 25L28 21.5L31.5 25" fill="none" stroke="#fff" stroke-width="2.2"/></svg>
<svg class="ic" style="left:1656px;top:1038.7px;width:35px;height:33px" viewBox="0 0 35 33"><rect x="1" y="3.7" width="33.5" height="26.2" rx="1.5" fill="#56554f"/><path d="M20 29.9L22 32L24 29.9Z" fill="#56554f"/><circle cx="10.7" cy="10.7" r="10.7" fill="#4aa8ef"/><rect x="9.3" y="4" width="2.8" height="8.5" fill="#fff"/><rect x="9.3" y="14.5" width="2.8" height="2.8" fill="#fff"/></svg>
<div class="abs" style="left:1731px;top:1033px;width:200px;text-align:center;font-size:20px;line-height:22px;color:#d5d7db">11:50 PM<br>December 11 2025</div>

</body></html>
